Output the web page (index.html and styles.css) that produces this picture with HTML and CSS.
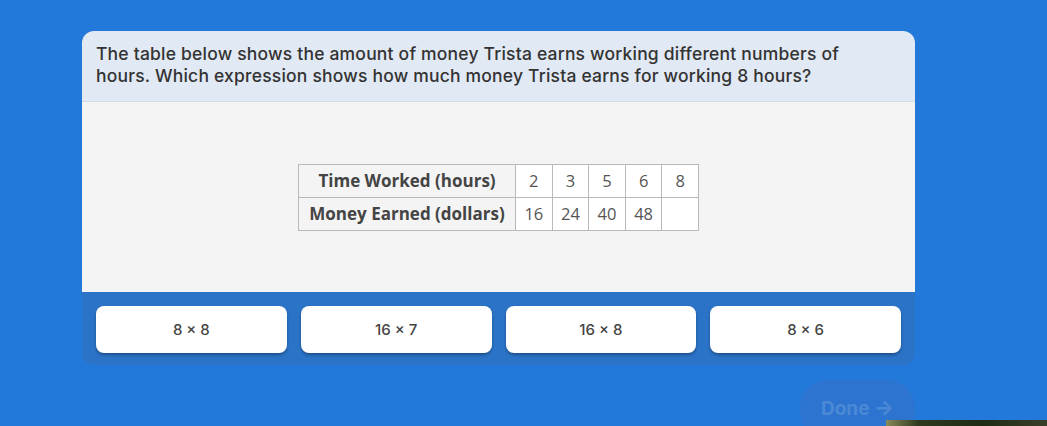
FILE: index.html
```html
<!DOCTYPE html>
<html>
<head>
<meta charset="utf-8">
<link rel="stylesheet" href="styles.css">
</head>
<body>
<div class="page">
  <div class="card">
    <div class="question">The table below shows the amount of money Trista earns working different numbers of hours. Which expression shows how much money Trista earns for working 8 hours?</div>
    <div class="content">
      <table class="data">
        <tr><th>Time Worked (hours)</th><td>2</td><td>3</td><td>5</td><td>6</td><td>8</td></tr>
        <tr><th>Money Earned (dollars)</th><td>16</td><td>24</td><td>40</td><td>48</td><td></td></tr>
      </table>
    </div>
    <div class="answers">
      <button class="answer">8 × 8</button>
      <button class="answer">16 × 7</button>
      <button class="answer">16 × 8</button>
      <button class="answer">8 × 6</button>
    </div>
  </div>
  <div class="footer">
    <button class="done">Done <span class="arrow">→</span></button>
  </div>
  <div class="strip"></div>
</div>
</body>
</html>
```

FILE: styles.css
```css
html, body {
  margin: 0;
  padding: 0;
  background: #2379da;
  overflow: hidden;
}
.page {
  width: 1047px;
  height: 426px;
  position: relative;
  padding: 31px 0 0 82px;
  box-sizing: border-box;
}
.card {
  width: 833px;
  border-radius: 12px;
  overflow: hidden;
  background: #2b73c6;
}
.question {
  background: #e1e9f4;
  color: #333;
  font-family: "Inter", "Noto Sans", sans-serif;
  font-size: 17.5px;
  font-weight: 500;
  letter-spacing: 0.2px;
  line-height: 22px;
  padding: 12px 60px 14px 14px;
  height: 44px;
  border-bottom: 1px solid #d4dbe4;
}
.content {
  background: #f4f4f4;
  height: 190px;
  display: flex;
  align-items: center;
  justify-content: center;
}
.data {
  border-collapse: collapse;
  font-family: "Open Sans", sans-serif;
  font-size: 16.5px;
  color: #555;
  background: #fff;
}
.data th, .data td {
  border: 1px solid #b9b9b9;
  height: 32px;
  padding: 0;
  text-align: center;
}
.data th {
  background: #f4f4f4;
  color: #444;
  font-weight: 700;
  font-size: 17px;
  width: 216px;
}
.data td {
  width: 35.6px;
}
.answers {
  display: flex;
  gap: 14px;
  padding: 14px 14px 12px 14px;
  height: 47px;
}
.answer {
  flex: 1;
  border: none;
  background: #fff;
  border-radius: 8px;
  box-shadow: 0 2px 3px rgba(0,0,0,0.3);
  font-family: "Inter", "Noto Sans", sans-serif;
  font-size: 15px;
  font-weight: 500;
  color: #444;
  cursor: pointer;
}
.footer {
  display: flex;
  justify-content: flex-end;
  width: 833px;
  margin-top: 15px;
}
.done {
  width: 115px;
  border: none;
  border-radius: 28px;
  background: #2c74cf;
  color: #4b89d6;
  font-family: "Inter", "Noto Sans", sans-serif;
  font-weight: 700;
  font-size: 19px;
  padding: 0 0 28px 0;
  height: 60px;
  line-height: 56px;
}
.arrow {
  font-size: 21px;
}
.strip {
  position: absolute;
  left: 886px;
  top: 420px;
  width: 161px;
  height: 6px;
  background: linear-gradient(90deg, #8a8a5a 0%, #2f3a1e 20%, #1e2a14 60%, #3a3f2a 100%);
}
```
